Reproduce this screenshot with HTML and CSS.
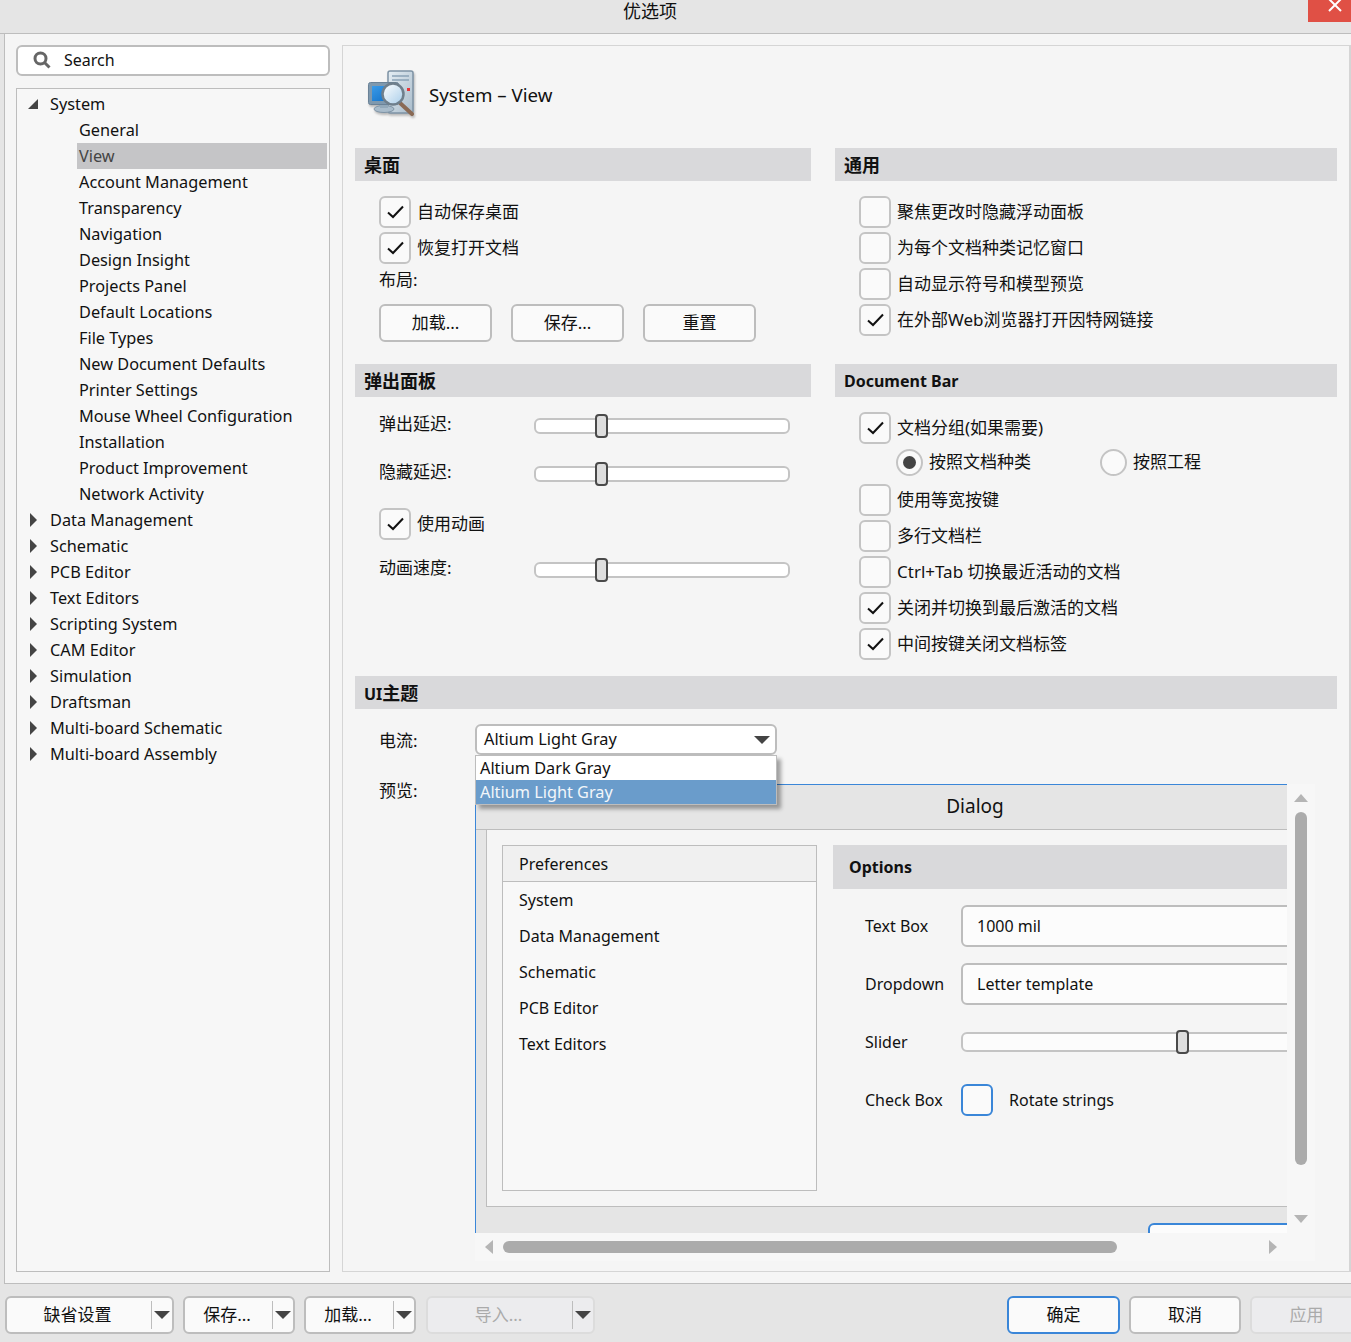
FILE: index.html
```html
<!DOCTYPE html>
<html lang="zh-CN">
<head>
    <meta charset="UTF-8">
    <title>优选项</title>
    <link rel="stylesheet" href="styles.css">
</head>
<body>
    <header class="titlebar">
        <span class="titlebar-text">优选项</span>
        <button class="close-btn">
            <svg width="14" height="14" viewBox="0 0 14 14"><path d="M1 1L13 13M13 1L1 13" stroke="#fff" stroke-width="2"/></svg>
        </button>
    </header>

    <main class="main">
        <aside class="sidebar">
            <div class="search">
                <svg class="search-icon" width="18" height="18" viewBox="0 0 18 18"><circle cx="7.5" cy="7.5" r="5.5" fill="none" stroke="#666" stroke-width="3"/><path d="M11.5 11.5L16.5 16.5" stroke="#666" stroke-width="3"/></svg>
                <span class="search-text">Search</span>
            </div>
            <nav class="tree">
                <div class="tree-row"><i class="arrow-open"></i>System</div>
                <div class="tree-child">General</div>
                <div class="tree-child selected">View</div>
                <div class="tree-child">Account Management</div>
                <div class="tree-child">Transparency</div>
                <div class="tree-child">Navigation</div>
                <div class="tree-child">Design Insight</div>
                <div class="tree-child">Projects Panel</div>
                <div class="tree-child">Default Locations</div>
                <div class="tree-child">File Types</div>
                <div class="tree-child">New Document Defaults</div>
                <div class="tree-child">Printer Settings</div>
                <div class="tree-child">Mouse Wheel Configuration</div>
                <div class="tree-child">Installation</div>
                <div class="tree-child">Product Improvement</div>
                <div class="tree-child">Network Activity</div>
                <div class="tree-row"><i class="arrow-closed"></i>Data Management</div>
                <div class="tree-row"><i class="arrow-closed"></i>Schematic</div>
                <div class="tree-row"><i class="arrow-closed"></i>PCB Editor</div>
                <div class="tree-row"><i class="arrow-closed"></i>Text Editors</div>
                <div class="tree-row"><i class="arrow-closed"></i>Scripting System</div>
                <div class="tree-row"><i class="arrow-closed"></i>CAM Editor</div>
                <div class="tree-row"><i class="arrow-closed"></i>Simulation</div>
                <div class="tree-row"><i class="arrow-closed"></i>Draftsman</div>
                <div class="tree-row"><i class="arrow-closed"></i>Multi-board Schematic</div>
                <div class="tree-row"><i class="arrow-closed"></i>Multi-board Assembly</div>
            </nav>
        </aside>

        <section class="panel">
            <div class="panel-header">
                <svg class="panel-icon" width="64" height="60" viewBox="0 0 64 60">
                    <defs>
                        <linearGradient id="tower" x1="0" y1="0" x2="1" y2="1"><stop offset="0" stop-color="#e4edf3"/><stop offset="1" stop-color="#a9bccb"/></linearGradient>
                        <linearGradient id="screen" x1="0" y1="0" x2="1" y2="1"><stop offset="0" stop-color="#3a9be8"/><stop offset="1" stop-color="#0f6cc4"/></linearGradient>
                        <linearGradient id="lens" x1="0" y1="0" x2="1" y2="1"><stop offset="0" stop-color="#ffffff"/><stop offset="1" stop-color="#a8cdea"/></linearGradient>
                    </defs>
                    <rect x="28" y="9" width="25" height="42" rx="2" fill="url(#tower)" stroke="#7e93a5" stroke-width="1.5"/>
                    <path d="M32 14H49M32 18H49" stroke="#8ba3b6" stroke-width="1.5"/>
                    <rect x="47" y="26" width="3" height="3" fill="#e8353a"/>
                    <ellipse cx="24" cy="47" rx="10" ry="3.5" fill="#a9bccb" stroke="#7e93a5"/>
                    <rect x="20" y="40" width="8" height="6" fill="#93a9ba"/>
                    <rect x="8.5" y="20.5" width="30" height="22" rx="2" fill="#7f99ae" stroke="#6a8297"/>
                    <rect x="12" y="24" width="23" height="15" fill="url(#screen)"/>
                    <path d="M40 41L52 52" stroke="#8a6a55" stroke-width="4" stroke-linecap="round"/>
                    <circle cx="33" cy="32" r="10.5" fill="url(#lens)" stroke="#6f7f8c" stroke-width="2.5"/>
                </svg>
                <h1 class="panel-title">System – View</h1>
            </div>

            <div class="columns">
                <section class="group group-desktop">
                    <h2 class="group-head head-cjk">桌面</h2>
                    <div class="group-body">
                        <label class="check-row"><span class="check on"><svg width="32" height="32" viewBox="0 0 32 32"><path d="M9 16.5L14 21L24 10.5"/></svg></span>自动保存桌面</label>
                        <label class="check-row"><span class="check on"><svg width="32" height="32" viewBox="0 0 32 32"><path d="M9 16.5L14 21L24 10.5"/></svg></span>恢复打开文档</label>
                        <div class="layout-label">布局:</div>
                        <div class="layout-btns">
                            <button class="btn">加载...</button>
                            <button class="btn">保存...</button>
                            <button class="btn">重置</button>
                        </div>
                    </div>
                </section>

                <section class="group group-desktop">
                    <h2 class="group-head head-cjk">通用</h2>
                    <div class="group-body">
                        <label class="check-row"><span class="check"></span>聚焦更改时隐藏浮动面板</label>
                        <label class="check-row"><span class="check"></span>为每个文档种类记忆窗口</label>
                        <label class="check-row"><span class="check"></span>自动显示符号和模型预览</label>
                        <label class="check-row"><span class="check on"><svg width="32" height="32" viewBox="0 0 32 32"><path d="M9 16.5L14 21L24 10.5"/></svg></span>在外部Web浏览器打开因特网链接</label>
                    </div>
                </section>

                <section class="group">
                    <h2 class="group-head head-cjk">弹出面板</h2>
                    <div class="group-body popup-body">
                        <div class="slider-row"><span class="slider-label">弹出延迟:</span><div class="slider"><span class="thumb"></span></div></div>
                        <div class="slider-row"><span class="slider-label">隐藏延迟:</span><div class="slider"><span class="thumb"></span></div></div>
                        <label class="check-row anim-check"><span class="check on"><svg width="32" height="32" viewBox="0 0 32 32"><path d="M9 16.5L14 21L24 10.5"/></svg></span>使用动画</label>
                        <div class="slider-row"><span class="slider-label">动画速度:</span><div class="slider"><span class="thumb"></span></div></div>
                    </div>
                </section>

                <section class="group group-docbar">
                    <h2 class="group-head">Document Bar</h2>
                    <div class="group-body">
                        <label class="check-row"><span class="check on"><svg width="32" height="32" viewBox="0 0 32 32"><path d="M9 16.5L14 21L24 10.5"/></svg></span>文档分组(如果需要)</label>
                        <div class="radio-row">
                            <label class="radio-item"><span class="radio on"></span>按照文档种类</label>
                            <label class="radio-item"><span class="radio"></span>按照工程</label>
                        </div>
                        <label class="check-row"><span class="check"></span>使用等宽按键</label>
                        <label class="check-row"><span class="check"></span>多行文档栏</label>
                        <label class="check-row"><span class="check"></span>Ctrl+Tab 切换最近活动的文档</label>
                        <label class="check-row"><span class="check on"><svg width="32" height="32" viewBox="0 0 32 32"><path d="M9 16.5L14 21L24 10.5"/></svg></span>关闭并切换到最后激活的文档</label>
                        <label class="check-row"><span class="check on"><svg width="32" height="32" viewBox="0 0 32 32"><path d="M9 16.5L14 21L24 10.5"/></svg></span>中间按键关闭文档标签</label>
                    </div>
                </section>
            </div>

            <section class="group theme-group">
                <h2 class="group-head">UI<span class="head-cjk">主题</span></h2>
                <div class="theme-row">
                    <span class="theme-label current-label">电流:</span>
                    <div class="combo">
                        <span class="combo-text">Altium Light Gray</span>
                        <i class="arrow-down"></i>
                        <div class="combo-list">
                            <div class="combo-item">Altium Dark Gray</div>
                            <div class="combo-item active">Altium Light Gray</div>
                        </div>
                    </div>
                </div>
                <div class="preview-row">
                    <span class="theme-label preview-label">预览:</span>
                    <div class="preview">
                        <div class="preview-view">
                            <div class="dialog">
                                <div class="dialog-title">Dialog</div>
                                <div class="dialog-frame">
                                    <div class="pref-list">
                                        <div class="pref-head">Preferences</div>
                                        <div class="pref-item">System</div>
                                        <div class="pref-item">Data Management</div>
                                        <div class="pref-item">Schematic</div>
                                        <div class="pref-item">PCB Editor</div>
                                        <div class="pref-item">Text Editors</div>
                                    </div>
                                    <div class="options">
                                        <div class="options-head">Options</div>
                                        <div class="opt-row"><span class="opt-label">Text Box</span><div class="opt-input">1000 mil</div></div>
                                        <div class="opt-row"><span class="opt-label">Dropdown</span><div class="opt-input">Letter template</div></div>
                                        <div class="opt-row"><span class="opt-label">Slider</span><div class="slider slider-wide"><span class="thumb thumb-wide"></span></div></div>
                                        <div class="opt-row"><span class="opt-label">Check Box</span><span class="check focus"></span><span class="opt-check-text">Rotate strings</span></div>
                                    </div>
                                </div>
                                <div class="dialog-foot"><div class="foot-btn"></div></div>
                            </div>
                        </div>
                        <div class="vscroll">
                            <i class="sb-up"></i>
                            <div class="vthumb"></div>
                            <i class="sb-down"></i>
                        </div>
                        <div class="hscroll">
                            <i class="sb-left"></i>
                            <div class="hthumb"></div>
                            <i class="sb-right"></i>
                        </div>
                    </div>
                </div>
            </section>
        </section>
    </main>

    <footer class="footer">
        <div class="split split-default"><span class="split-text">缺省设置</span><span class="split-arrow"><i class="arrow-down"></i></span></div>
        <div class="split split-small"><span class="split-text">保存...</span><span class="split-arrow"><i class="arrow-down"></i></span></div>
        <div class="split split-small"><span class="split-text">加载...</span><span class="split-arrow"><i class="arrow-down"></i></span></div>
        <div class="split split-default disabled"><span class="split-text">导入...</span><span class="split-arrow"><i class="arrow-down"></i></span></div>
        <button class="btn btn-ok">确定</button>
        <button class="btn btn-cancel">取消</button>
        <button class="btn btn-disabled">应用</button>
    </footer>
</body>
</html>
```

FILE: styles.css
```css
:root {
    --bg-color: #e5e5e5;
    --panel-color: #f5f5f5;
    --head-color: #d9d9db;
    --border-color: #bdbdbd;
    --text-color: #111;
    --blue: #3a86d8;
}

* {
    box-sizing: border-box;
    margin: 0;
    padding: 0;
}

body {
    width: 1351px;
    height: 1342px;
    overflow: hidden;
    background-color: var(--bg-color);
    color: var(--text-color);
    font-family: "Noto Sans", "Noto Sans CJK SC", sans-serif;
    font-size: 16px;
    line-height: 24px;
}

.titlebar {
    height: 34px;
    display: flex;
    justify-content: space-between;
    border-bottom: 1px solid var(--border-color);
}

.titlebar-text {
    margin-left: 623px;
    font-size: 18px;
    line-height: 22px;
}

.close-btn {
    width: 43px;
    height: 22px;
    padding-left: 20px;
    border: none;
    background-color: #e05045;
    display: flex;
    align-items: flex-start;
    overflow: hidden;
}

.close-btn svg {
    margin-top: -2px;
}

.main {
    height: 1250px;
    margin-left: 4px;
    padding: 11px 0 11px 11px;
    display: flex;
    gap: 12px;
    background-color: var(--panel-color);
    border-left: 1px solid var(--border-color);
    border-bottom: 1px solid var(--border-color);
}

/* left side */
.sidebar {
    width: 314px;
    display: flex;
    flex-direction: column;
    gap: 12px;
    flex-shrink: 0;
}

.search {
    height: 31px;
    display: flex;
    align-items: center;
    gap: 13px;
    padding-left: 15px;
    background-color: #fff;
    border: 2px solid var(--border-color);
    border-radius: 6px;
}

.search-icon {
    margin-top: -1px;
}

.search-text {
    margin-top: -2px;
}

.tree {
    flex: 1;
    padding: 2px 2px 0 0;
    background-color: #f7f7f7;
    border: 1px solid var(--border-color);
    font-size: 16.3px;
}

.tree-row {
    height: 26px;
    line-height: 26px;
    display: flex;
    align-items: center;
    padding-left: 33px;
    position: relative;
}

.tree-child {
    height: 26px;
    line-height: 26px;
    margin-left: 60px;
    padding-left: 2px;
}

.tree-child.selected {
    background-color: #c5c5c7;
    color: #444;
}

.arrow-open {
    position: absolute;
    left: 11px;
    top: 8px;
    border-left: 10px solid transparent;
    border-bottom: 10px solid #444;
}

.arrow-closed {
    position: absolute;
    left: 13px;
    top: 6px;
    border-left: 7px solid #444;
    border-top: 7px solid transparent;
    border-bottom: 7px solid transparent;
}

/* right panel */
.panel {
    flex: 1;
    background-color: var(--panel-color);
    border: 1px solid #d5d5d5;
    border-right-width: 2px;
}

.panel-header {
    height: 102px;
    display: flex;
    align-items: flex-start;
    gap: 5px;
    padding: 16px 0 0 17px;
}

.panel-icon {
    filter: drop-shadow(1px 2px 1px rgba(0, 0, 0, 0.25));
}

.panel-title {
    font-size: 18.7px;
    font-weight: 400;
    line-height: 28px;
    margin-top: 19px;
}

.columns {
    display: grid;
    grid-template-columns: 456px 502px;
    column-gap: 24px;
    margin-left: 12px;
}

.group-desktop {
    margin-bottom: 22px;
}

.group-docbar {
    margin-bottom: 12px;
}

.group-head {
    height: 33px;
    line-height: 34px;
    padding-left: 9px;
    background-color: var(--head-color);
    font-size: 16px;
    font-weight: 700;
}

.head-cjk {
    font-size: 18px;
}

.group-body {
    padding: 15px 0 0 24px;
    font-size: 17px;
}

.check-row {
    height: 32px;
    margin-bottom: 4px;
    display: flex;
    align-items: center;
    gap: 6px;
}

.check {
    width: 32px;
    height: 32px;
    flex-shrink: 0;
    background-color: #fafafa;
    border: 2px solid #c4c4c4;
    border-radius: 6px;
    display: block;
}

.check svg {
    display: block;
    margin: -2px;
}

.check path {
    fill: none;
    stroke: #111;
    stroke-width: 2;
}

.check.focus {
    border-color: var(--blue);
}

.layout-label {
    height: 24px;
    line-height: 24px;
}

.layout-btns {
    display: flex;
    gap: 19px;
    margin-top: 12px;
}

.btn {
    width: 113px;
    height: 38px;
    background-color: #fafafa;
    border: 2px solid var(--border-color);
    border-radius: 6px;
    color: var(--text-color);
    font: inherit;
}

.popup-body {
    padding-top: 13px;
}

.slider-row {
    height: 32px;
    margin-bottom: 16px;
    display: flex;
    align-items: center;
}

.slider-label {
    width: 155px;
    margin-top: -4px;
}

.slider {
    width: 256px;
    height: 16px;
    background-color: #fff;
    border: 2px solid #c4c4c4;
    border-radius: 6px;
    position: relative;
}

.thumb {
    position: absolute;
    left: 59px;
    top: -6px;
    width: 13px;
    height: 24px;
    background-color: #dedede;
    border: 2px solid #4a4a4a;
    border-radius: 4px;
}

.anim-check {
    margin-top: 18px;
    margin-bottom: 14px;
}

.radio-row {
    height: 28px;
    margin: 0 0 8px 37px;
    display: flex;
}

.radio-item {
    width: 204px;
    display: flex;
    align-items: center;
    gap: 6px;
}

.radio {
    width: 27px;
    height: 27px;
    background-color: #fafafa;
    border: 2px solid #c4c4c4;
    border-radius: 50%;
    position: relative;
}

.radio.on::after {
    content: "";
    position: absolute;
    left: 5px;
    top: 5px;
    width: 13px;
    height: 13px;
    background-color: #444;
    border-radius: 50%;
}

/* theme section */
.theme-group {
    margin-left: 12px;
    margin-right: 12px;
}

.theme-row {
    display: flex;
    align-items: center;
    padding: 15px 0 0 24px;
}

.theme-label {
    width: 96px;
    font-size: 17px;
}

.current-label {
    margin-top: 3px;
}

.combo {
    width: 302px;
    height: 31px;
    padding-left: 7px;
    display: flex;
    align-items: center;
    justify-content: space-between;
    background-color: #fff;
    border: 2px solid var(--border-color);
    border-radius: 6px;
    position: relative;
    font-size: 16.3px;
}

.combo-text {
    margin-top: -2px;
}

.arrow-down {
    display: block;
    border-left: 8px solid transparent;
    border-right: 8px solid transparent;
    border-top: 8px solid #444;
}

.combo .arrow-down {
    margin-right: 5px;
}

.combo-list {
    position: absolute;
    left: -2px;
    top: 29px;
    width: 302px;
    height: 50px;
    z-index: 5;
    background-color: #fff;
    border: 1px solid var(--border-color);
    box-shadow: 4px 4px 4px rgba(0, 0, 0, 0.35);
}

.combo-item {
    height: 24px;
    padding-left: 4px;
}

.combo-item.active {
    background-color: #6a9ccb;
    color: #f2f6fa;
}

.preview-row {
    display: flex;
    align-items: flex-start;
    padding: 29px 0 0 24px;
}

.preview-label {
    margin-top: -5px;
}

.preview {
    display: grid;
    grid-template-columns: 812px 28px;
    grid-template-rows: 449px 28px;
    background-color: #f7f7f7;
}

.preview-view {
    overflow: hidden;
    background-color: var(--bg-color);
    border-top: 1px solid var(--blue);
    border-left: 1px solid var(--blue);
}

.dialog {
    width: 998px;
}

.dialog-title {
    height: 45px;
    line-height: 42px;
    text-align: center;
    font-size: 19px;
    border-bottom: 1px solid var(--border-color);
}

.dialog-frame {
    height: 377px;
    margin-left: 10px;
    padding: 15px 0 0 15px;
    display: flex;
    gap: 16px;
    background-color: var(--panel-color);
    border-left: 1px solid var(--border-color);
    border-bottom: 1px solid var(--border-color);
}

.pref-list {
    width: 315px;
    height: 346px;
    background-color: #f8f8f8;
    border: 1px solid var(--border-color);
}

.pref-head {
    height: 36px;
    line-height: 36px;
    padding-left: 16px;
    background-color: #f0f0f0;
    border-bottom: 1px solid var(--border-color);
}

.pref-item {
    height: 36px;
    line-height: 36px;
    padding-left: 16px;
}

.options {
    flex: 1;
}

.options-head {
    height: 44px;
    line-height: 44px;
    padding-left: 16px;
    margin-bottom: 16px;
    background-color: var(--head-color);
    font-weight: 700;
}

.opt-row {
    height: 42px;
    margin-bottom: 16px;
    padding-left: 32px;
    display: flex;
    align-items: center;
}

.opt-label {
    width: 96px;
}

.opt-input {
    flex: 1;
    height: 42px;
    line-height: 38px;
    padding-left: 14px;
    background-color: #fcfcfc;
    border: 2px solid var(--border-color);
    border-radius: 6px;
}

.slider-wide {
    flex: 1;
    height: 20px;
    background-color: #fcfcfc;
}

.thumb-wide {
    left: 213px;
    top: -4px;
}

.opt-check-text {
    margin-left: 16px;
}

.dialog-foot {
    height: 26px;
    overflow: hidden;
    padding: 16px 0 0 672px;
}

.foot-btn {
    width: 200px;
    height: 38px;
    background-color: #fcfcfc;
    border: 2px solid var(--blue);
    border-radius: 6px;
}

.vscroll {
    display: flex;
    flex-direction: column;
    align-items: center;
    padding-top: 10px;
}

.sb-up {
    border-left: 7px solid transparent;
    border-right: 7px solid transparent;
    border-bottom: 8px solid #b5b5b5;
}

.sb-down {
    margin-top: 50px;
    border-left: 7px solid transparent;
    border-right: 7px solid transparent;
    border-top: 8px solid #b5b5b5;
}

.vthumb {
    width: 12px;
    height: 353px;
    margin-top: 10px;
    background-color: #ababab;
    border-radius: 6px;
}

.hscroll {
    display: flex;
    align-items: center;
    padding-left: 10px;
}

.sb-left {
    border-top: 7px solid transparent;
    border-bottom: 7px solid transparent;
    border-right: 8px solid #b5b5b5;
}

.sb-right {
    margin-left: 152px;
    border-top: 7px solid transparent;
    border-bottom: 7px solid transparent;
    border-left: 8px solid #b5b5b5;
}

.hthumb {
    width: 614px;
    height: 12px;
    margin-left: 10px;
    background-color: #ababab;
    border-radius: 6px;
}

/* bottom buttons */
.footer {
    display: flex;
    gap: 9px;
    padding: 12px 0 0 5px;
    font-size: 17px;
}

.split {
    height: 38px;
    display: flex;
    background-color: #fafafa;
    border: 2px solid var(--border-color);
    border-radius: 6px;
}

.split-default {
    width: 169px;
}

.split-small {
    width: 112px;
}

.split-text {
    flex: 1;
    padding-right: 3px;
    text-align: center;
    line-height: 34px;
}

.split-arrow {
    width: 21px;
    margin: 3px 0;
    display: flex;
    align-items: center;
    justify-content: center;
    border-left: 1px solid var(--border-color);
}

.split.disabled {
    margin-left: 1px;
    background-color: #ececee;
    border-color: #dcdcdc;
    color: #aaa;
}

.btn-ok {
    margin-left: auto;
    border-color: var(--blue);
}

.btn-cancel {
    width: 112px;
}

.btn-disabled {
    flex-shrink: 0;
    margin-right: -12px;
    background-color: #ececee;
    border-color: #dcdcdc;
    color: #aaa;
}
```
